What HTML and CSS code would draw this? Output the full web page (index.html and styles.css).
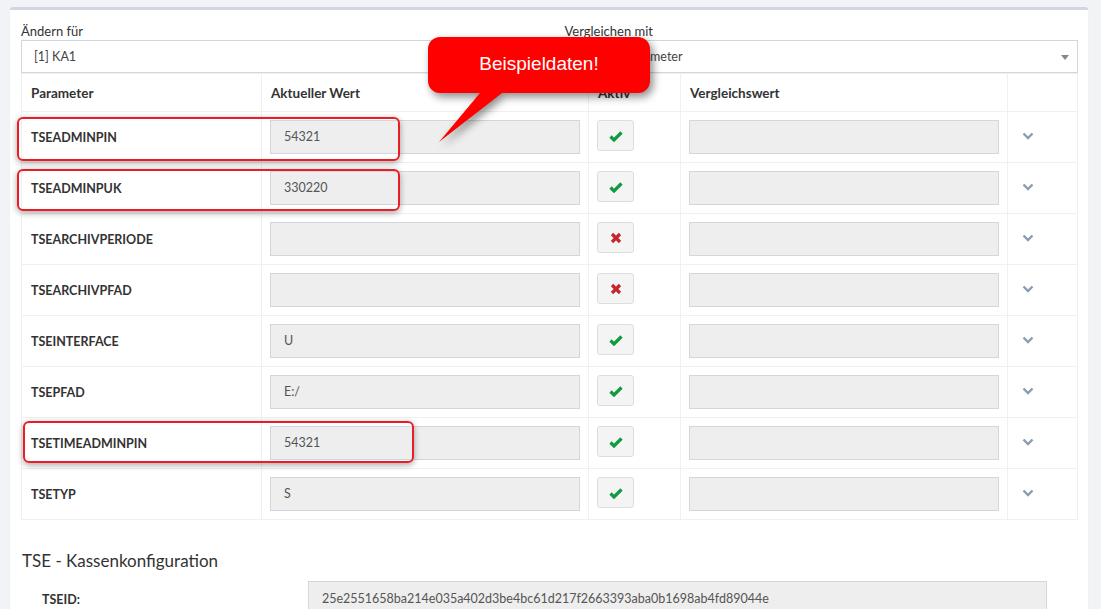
FILE: index.html
```html
<!DOCTYPE html>
<html lang="de">
<head>
  <meta charset="UTF-8" />
  <title>TSE Parameter</title>
  <link rel="stylesheet" href="styles.css">
</head>
<body>
  <div class="box">
    <div class="pickers">
      <div class="picker">
        <label>Ändern für</label>
        <div class="select">[1] KA1</div>
      </div>
      <div class="picker">
        <label>Vergleichen mit</label>
        <div class="select">Standardparameter<span class="caret"></span></div>
      </div>
    </div>

    <table class="params">
      <colgroup>
        <col class="c-name"><col class="c-val"><col class="c-act"><col class="c-cmp"><col class="c-more">
      </colgroup>
      <thead>
        <tr><th>Parameter</th><th>Aktueller Wert</th><th>Aktiv</th><th>Vergleichswert</th><th></th></tr>
      </thead>
      <tbody id="rows"></tbody>
    </table>

    <h3 class="section">TSE - Kassenkonfiguration</h3>
    <div class="kv">
      <span class="kv-label">TSEID:</span>
      <div class="field">25e2551658ba214e035a402d3be4bc61d217f2663393aba0b1698ab4fd89044e</div>
    </div>
  </div>

  <!-- markers -->
  <div class="mark m1"></div>
  <div class="mark m2"></div>
  <div class="mark m3"></div>

  <div class="callout">
    <svg width="240" height="120" viewBox="0 0 240 120">
      <path d="M12 0 H210 A12 12 0 0 1 222 12 V44 A12 12 0 0 1 210 56 H74 L11 105 L52 56 H12 A12 12 0 0 1 0 44 V12 A12 12 0 0 1 12 0 Z" fill="#ff0000"/>
    </svg>
    <span>Beispieldaten!</span>
  </div>

  <script>
    const rows = [
      ["TSEADMINPIN", "54321", true],
      ["TSEADMINPUK", "330220", true],
      ["TSEARCHIVPERIODE", "", false],
      ["TSEARCHIVPFAD", "", false],
      ["TSEINTERFACE", "U", true],
      ["TSEPFAD", "E:/", true],
      ["TSETIMEADMINPIN", "54321", true],
      ["TSETYP", "S", true]
    ];

    const check = '<svg width="14" height="12" viewBox="0 0 14 12"><path d="M1.5 6.5 L5 10 L12.5 2.5" fill="none" stroke="#119a3f" stroke-width="3.2"/></svg>';
    const cross = '<svg width="12" height="12" viewBox="0 0 12 12"><path d="M2 2 L10 10 M10 2 L2 10" fill="none" stroke="#c4262e" stroke-width="3.2"/></svg>';
    const chevron = '<svg width="12" height="8" viewBox="0 0 12 8"><path d="M1.5 1.5 L6 6 L10.5 1.5" fill="none" stroke="#8e9bb0" stroke-width="2.4"/></svg>';

    document.getElementById("rows").innerHTML = rows.map(([name, value, active]) => `
      <tr>
        <td class="name">${name}</td>
        <td><div class="field">${value}</div></td>
        <td><button class="toggle">${active ? check : cross}</button></td>
        <td><div class="field"></div></td>
        <td class="more">${chevron}</td>
      </tr>`).join("");
  </script>
</body>
</html>
```

FILE: styles.css
```css
body {
  margin: 0;
  background: #f2f3f6;
  font-family: Lato, "Open Sans", sans-serif;
  color: #333;
}

.box {
  margin: 7px 13px 0 10px;
  background: #fff;
  border-top: 3px solid #d2d6de;
  border-radius: 3px;
  box-shadow: 0 1px 1px rgba(0, 0, 0, 0.1);
  padding: 12px 10px 30px 11px;
}

.pickers {
  display: grid;
  grid-template-columns: 1fr 1fr;
  column-gap: 30px;
}

.picker label {
  display: block;
  font-size: 13px;
  line-height: 18px;
  color: #333;
}

.select {
  position: relative;
  height: 33px;
  box-sizing: border-box;
  border: 1px solid #d2d6de;
  padding: 0 12px;
  font-size: 12.5px;
  line-height: 31px;
  color: #444;
}

.caret {
  position: absolute;
  right: 8px;
  top: 14px;
  border-left: 4px solid transparent;
  border-right: 4px solid transparent;
  border-top: 5px solid #888;
}

.params {
  width: 100%;
  border-collapse: collapse;
  table-layout: fixed;
}

.c-name { width: 240px; }
.c-val { width: 327px; }
.c-act { width: 92px; }
.c-cmp { width: 327px; }

.params th,
.params td {
  border: 1px solid #f0f0f0;
  padding: 8px;
  text-align: left;
  vertical-align: middle;
}

.params th {
  font-size: 13.5px;
  font-weight: 700;
  height: 21px;
  padding-left: 9px;
}

.params td.name {
  font-size: 12.5px;
  font-weight: 700;
  padding-left: 9px;
}

.field {
  height: 34px;
  box-sizing: border-box;
  background: #eee;
  border: 1px solid #d2d6de;
  padding: 0 13px;
  font-size: 12.5px;
  line-height: 32px;
  color: #555;
}

.toggle {
  width: 37px;
  height: 31px;
  margin-bottom: 3px;
  background: #f4f4f4;
  border: 1px solid #ddd;
  border-radius: 3px;
  display: flex;
  align-items: center;
  justify-content: center;
  padding: 0;
}

.more {
  padding-left: 14px !important;
}

.more svg {
  display: block;
  margin-top: -3px;
}

.section {
  margin: 30px 0 9px 1px;
  font-size: 17px;
  font-weight: 400;
  line-height: 22px;
}

.kv {
  display: grid;
  grid-template-columns: 245px 739px;
  column-gap: 21px;
  align-items: center;
  padding-left: 21px;
}

.kv-label {
  font-size: 12.5px;
  font-weight: 700;
}

.kv .field {
  height: 36px;
  line-height: 34px;
  font-size: 12.5px;
}

/* red frames drawn over the table */
.mark {
  position: absolute;
  border: 2px solid #ec1c24;
  border-radius: 6px;
  box-shadow: 0 2px 6px rgba(0, 0, 0, 0.35);
}

.m1 { left: 17px; top: 117px; width: 379px; height: 40px; }
.m2 { left: 17px; top: 169px; width: 379px; height: 38px; }
.m3 { left: 23px; top: 421px; width: 387px; height: 38px; }

.callout {
  position: absolute;
  left: 428px;
  top: 37px;
  width: 240px;
  height: 120px;
}

.callout svg {
  display: block;
  filter: drop-shadow(3px 4px 4px rgba(0, 0, 0, 0.45));
}

.callout span {
  position: absolute;
  left: 0;
  top: 16px;
  width: 222px;
  text-align: center;
  font-family: "Liberation Sans", Arial, sans-serif;
  font-size: 19px;
  color: #fff;
}
```
